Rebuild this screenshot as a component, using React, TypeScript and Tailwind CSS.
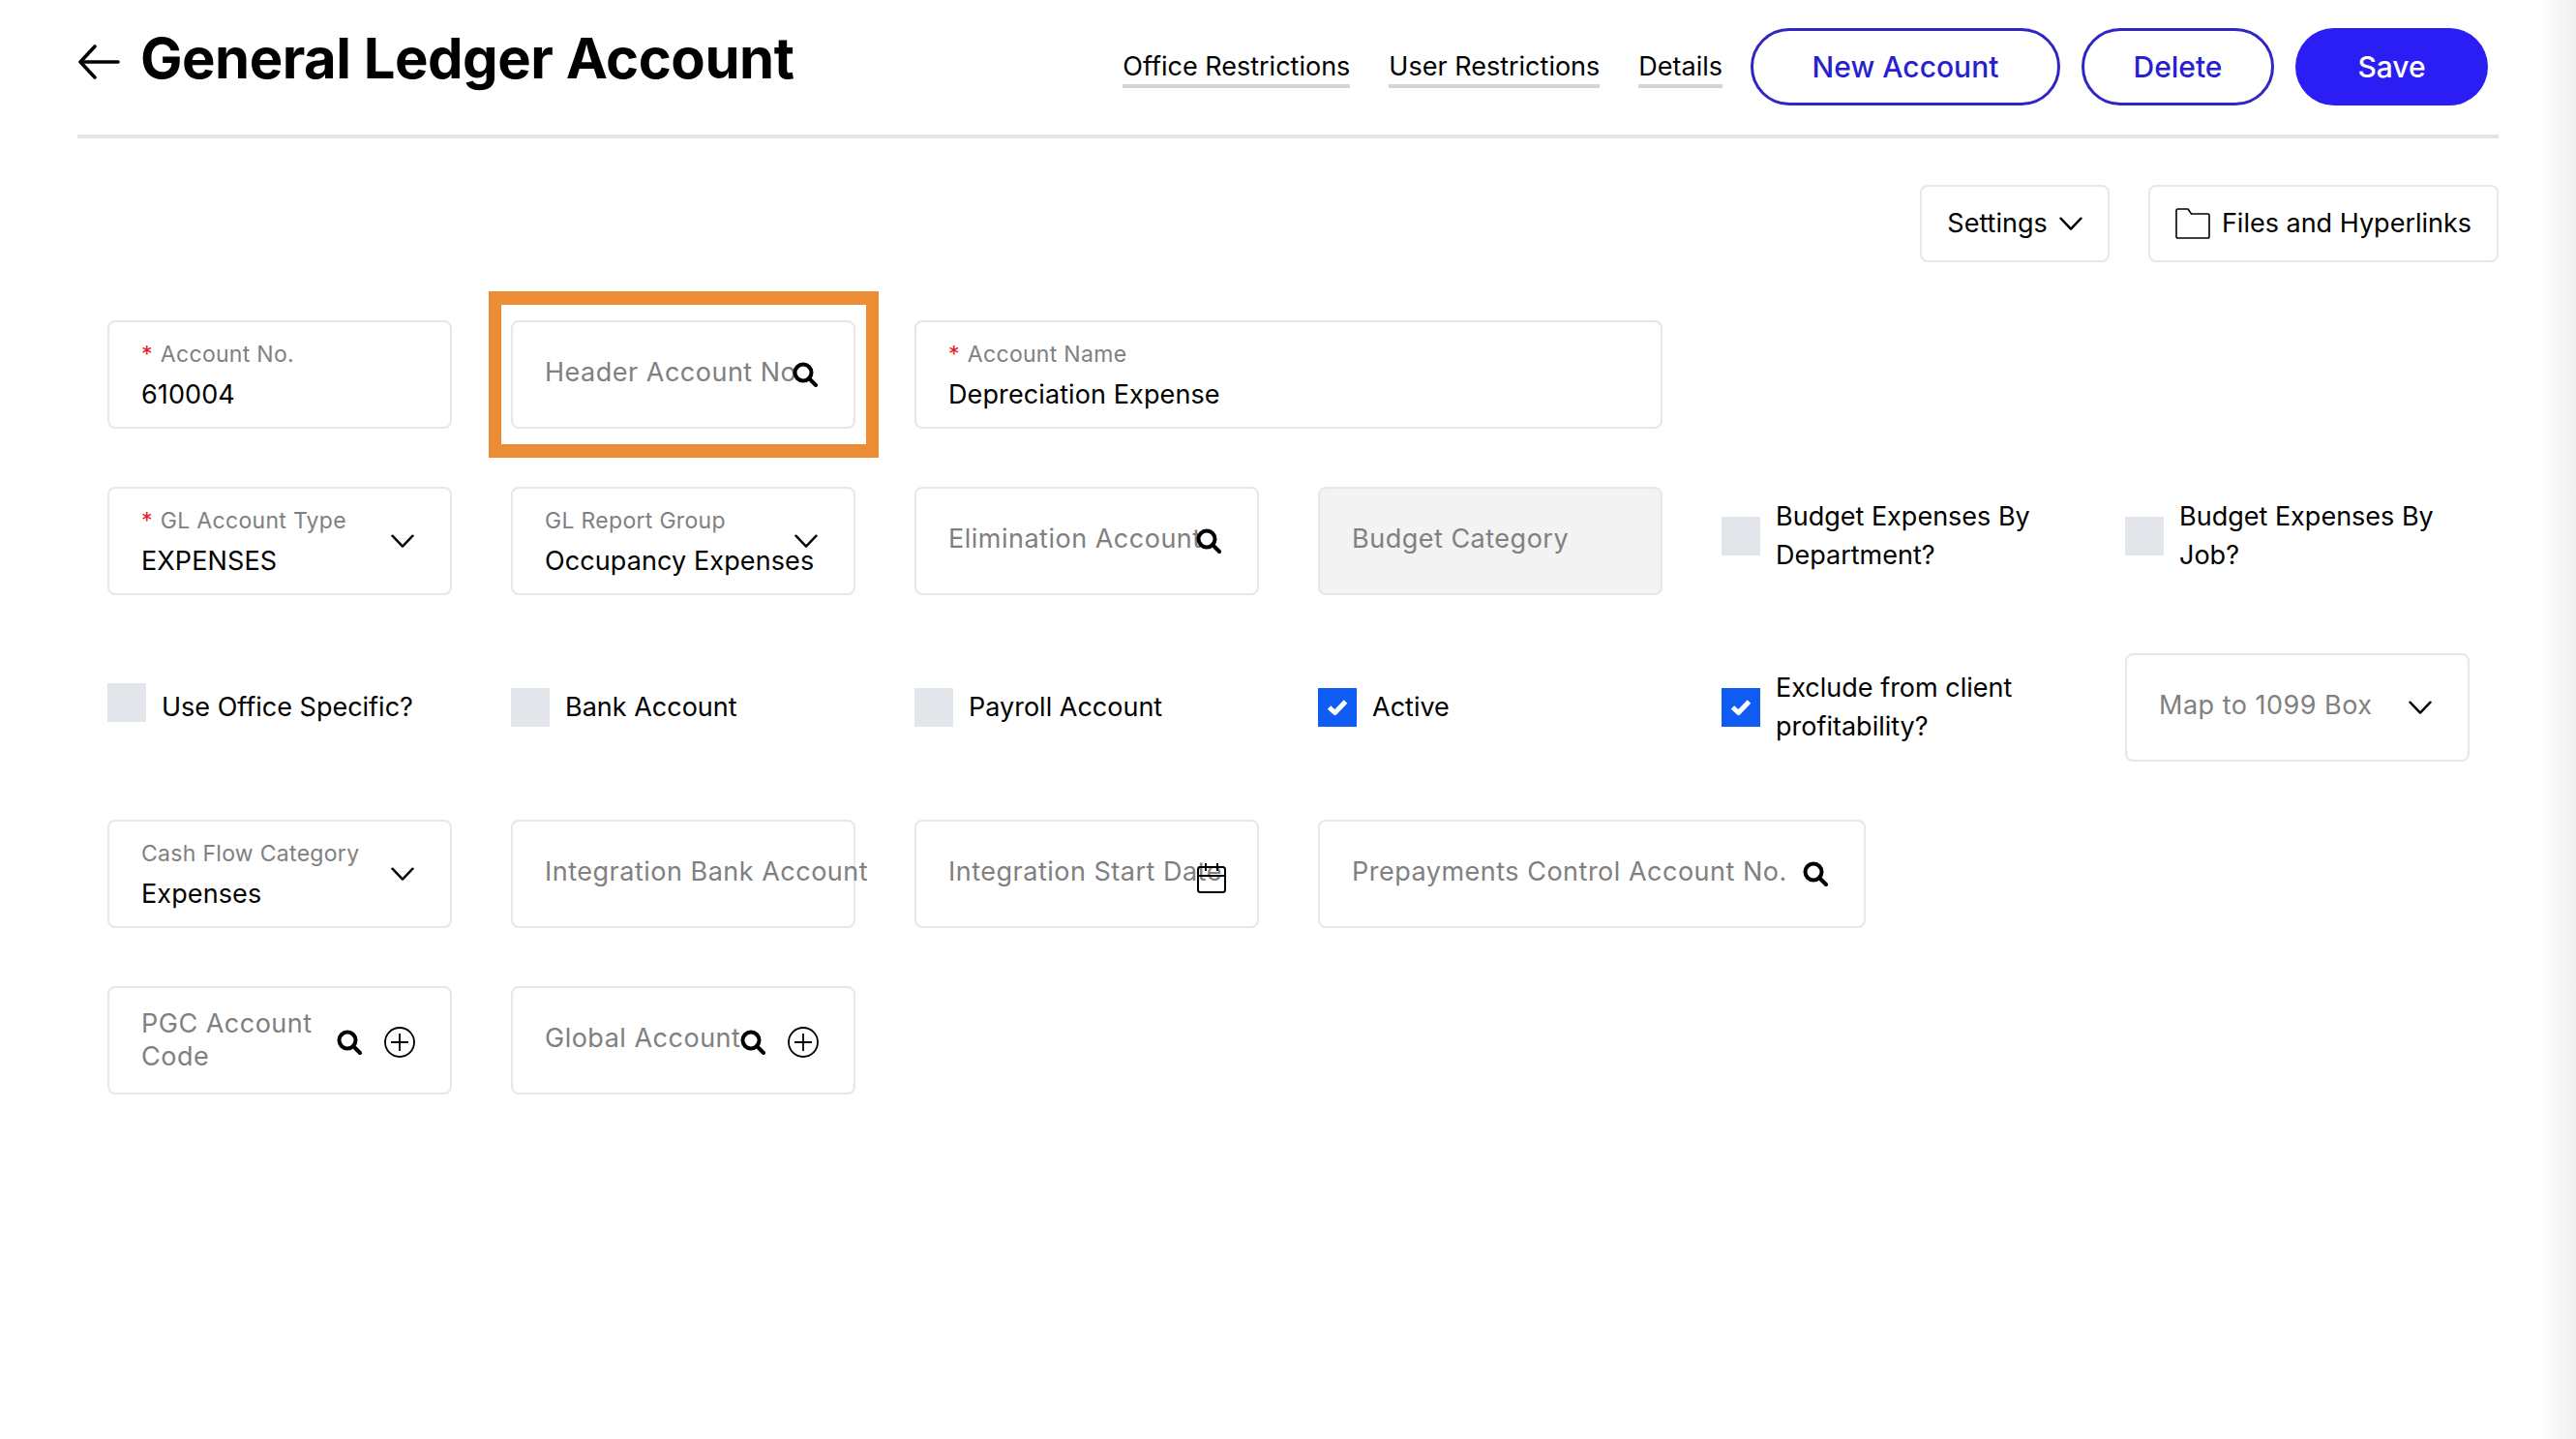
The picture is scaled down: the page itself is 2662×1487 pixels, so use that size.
import React from 'react';

const SearchIcon = () => (
  <svg width="26" height="26" viewBox="0 0 26 26" fill="none" stroke="#000" strokeWidth="4">
    <circle cx="11" cy="11" r="8.5" />
    <path d="M17 17l7 7" strokeLinecap="round" />
  </svg>
);

const Chevron = ({ size = 24 }: { size?: number }) => (
  <svg width={size} height={size * 0.6} viewBox="0 0 24 14" fill="none" stroke="#000" strokeWidth="2.4" strokeLinecap="round" strokeLinejoin="round">
    <path d="M1.5 1.5L12 12.5 22.5 1.5" />
  </svg>
);

const PlusCircle = () => (
  <svg width="32" height="32" viewBox="0 0 32 32" fill="none" stroke="#000" strokeWidth="1.8">
    <circle cx="16" cy="16" r="15" />
    <path d="M16 7v18M7 16h18" />
  </svg>
);

const CalendarIcon = () => (
  <svg width="30" height="32" viewBox="0 0 30 32" fill="none" stroke="#000" strokeWidth="2">
    <rect x="1" y="5" width="28" height="26" rx="2.5" />
    <path d="M1 14h28M9 1v8M21 1v8" />
  </svg>
);

const FolderIcon = () => (
  <svg width="36" height="32" viewBox="0 0 36 32" fill="none" stroke="#000" strokeWidth="1.6" strokeLinejoin="round">
    <path d="M1 2.5A1.5 1.5 0 0 1 2.5 1h10.5l3.5 5h17A1.5 1.5 0 0 1 35 7.500V29.500A1.500 1.500 0 0 1 33.500 31h-31A1.500 1.500 0 0 1 1 29.500z" />
  </svg>
);

const Box = ({ className = '', children }: { className?: string; children: React.ReactNode }) => (
  <div className={`relative h-[112px] rounded-lg border-2 border-[#e5e7eb] flex flex-col justify-center pl-[33px] ${className}`}>
    {children}
  </div>
);

const Filled = ({ label, value, required, chevron }: { label: string; value: string; required?: boolean; chevron?: boolean }) => (
  <Box>
    <div className="text-[23px] leading-[30px] text-[#808080] whitespace-nowrap tracking-[0.3px]">
      {required && <span className="text-[#e02020] mr-2">*</span>}
      {label}
    </div>
    <div className="mt-[11px] text-[27px] leading-[32px] text-black whitespace-nowrap tracking-[0.1px]">{value}</div>
    {chevron && (
      <div className="absolute right-[37px] top-[47px]">
        <Chevron />
      </div>
    )}
  </Box>
);

const Placeholder = ({ text, icon, className = '' }: { text: string; icon?: React.ReactNode; className?: string }) => (
  <Box className={className}>
    <div className="text-[27px] leading-[32px] text-[#808080] whitespace-nowrap tracking-[0.5px] -mt-[4px]">{text}</div>
    {icon}
  </Box>
);

const Check = ({ label, on, className = '' }: { label: string; on?: boolean; className?: string }) => (
  <div className="flex items-center gap-4">
    <div className={`w-10 h-10 shrink-0 flex items-center justify-center ${on ? 'bg-[#0f5cf5]' : 'bg-[#e2e5ea]'} ${className}`}>
      {on && (
        <svg width="22" height="18" viewBox="0 0 22 18" fill="none" stroke="#fff" strokeWidth="5" strokeLinejoin="round">
          <path d="M2.500 9l6 5.500L19.500 3" />
        </svg>
      )}
    </div>
    <div className="text-[27px] leading-[40px] text-black">{label}</div>
  </div>
);

const Tab = ({ children }: { children: React.ReactNode }) => (
  <div className="text-[27px] leading-[32px] text-black border-b-4 border-[#d4d4d4] pb-[2px] whitespace-nowrap">{children}</div>
);

export default function App() {
  return (
    <div className="relative w-full h-[1487px] bg-white overflow-hidden font-['Inter',sans-serif]">
      {/* sombra do painel lateral */}
      <div className="absolute top-0 right-0 bottom-0 w-[40px] bg-gradient-to-r from-white to-[#f0f0f0]" />

      {/* Header */}
      <header className="relative mx-[80px] h-[143px] border-b-4 border-[#e2e4e8] flex items-start pr-[11px]">
        <div className="flex items-center mt-[24px]">
          <svg width="44" height="36" viewBox="0 0 44 36" fill="none" stroke="#000" strokeWidth="3.600" strokeLinecap="round" strokeLinejoin="round" className="mt-[7px]">
            <path d="M42 18H3M18 2L3 18l15 16" />
          </svg>
          <h1 className="ml-[21px] text-[58px] leading-[72px] font-bold text-black whitespace-nowrap tracking-[-0.5px]">General Ledger Account</h1>
        </div>
        <div className="ml-auto flex items-start mt-[29px]">
          <div className="flex gap-10 mt-[24px] mr-[29px]">
            <Tab>Office Restrictions</Tab>
            <Tab>User Restrictions</Tab>
            <Tab>Details</Tab>
          </div>
          <div className="flex gap-[22px]">
            <button className="w-[320px] h-[80px] rounded-full border-[3px] border-[#3126c4] text-[#2a1fd0] text-[30px] font-medium">New Account</button>
            <button className="w-[199px] h-[80px] rounded-full border-[3px] border-[#3126c4] text-[#2a1fd0] text-[30px] font-medium">Delete</button>
            <button className="w-[199px] h-[80px] rounded-full bg-[#2a1ef5] text-white text-[30px] font-medium">Save</button>
          </div>
        </div>
      </header>

      {/* Acoes */}
      <div className="flex justify-end gap-10 mt-[48px] mr-[80px]">
        <button className="w-[196px] h-[80px] rounded-lg border-2 border-[#e5e7eb] flex items-center justify-center gap-3 text-[27px] text-black">
          Settings
          <Chevron />
        </button>
        <button className="w-[362px] h-[80px] rounded-lg border-2 border-[#e5e7eb] flex items-center justify-center gap-3 text-[27px] text-black">
          <FolderIcon />
          Files and Hyperlinks
        </button>
      </div>

      {/* Formulario */}
      <div className="ml-[111px] mt-[60px] grid grid-cols-[repeat(6,356px)] auto-rows-[112px] gap-x-[61px] gap-y-[60px]">
        <Filled required label="Account No." value="610004" />
        <div className="relative">
          <Placeholder
            text="Header Account No."
            icon={
              <div className="absolute right-[37px] top-[41px]">
                <SearchIcon />
              </div>
            }
          />
          <div className="absolute -left-[23px] -right-[24px] -top-[30px] -bottom-[30px] border-x-[13px] border-y-[14px] border-[#ec8c35] pointer-events-none" />
        </div>
        <div className="col-span-2">
          <Filled required label="Account Name" value="Depreciation Expense" />
        </div>
        <div className="col-span-2" />

        <Filled required label="GL Account Type" value="EXPENSES" chevron />
        <Filled label="GL Report Group" value="Occupancy Expenses" chevron />
        <Placeholder
          text="Elimination Account"
          icon={
            <div className="absolute right-[37px] top-[41px]">
              <SearchIcon />
            </div>
          }
        />
        <Placeholder text="Budget Category" className="bg-[#f3f3f3]" />
        <div className="flex items-center -mt-[10px]">
          <Check label="Budget Expenses By Department?" />
        </div>
        <div className="flex items-center -mt-[10px] pr-[20px]">
          <Check label="Budget Expenses By Job?" />
        </div>

        <div className="flex items-center">
          <Check label="Use Office Specific?" className="-mt-[10px]" />
        </div>
        <div className="flex items-center">
          <Check label="Bank Account" />
        </div>
        <div className="flex items-center">
          <Check label="Payroll Account" />
        </div>
        <div className="flex items-center">
          <Check label="Active" on />
        </div>
        <div className="flex items-center">
          <Check label="Exclude from client profitability?" on />
        </div>
        <Placeholder
          text="Map to 1099 Box"
          icon={
            <div className="absolute right-[37px] top-[47px]">
              <Chevron />
            </div>
          }
        />

        <Filled label="Cash Flow Category" value="Expenses" chevron />
        <Placeholder text="Integration Bank Account" />
        <Placeholder
          text="Integration Start Date"
          icon={
            <div className="absolute right-[32px] top-[42px]">
              <CalendarIcon />
            </div>
          }
        />
        <div className="col-span-3">
          <Placeholder
            className="w-[566px]"
            text="Prepayments Control Account No."
            icon={
              <div className="absolute right-[37px] top-[41px]">
                <SearchIcon />
              </div>
            }
          />
        </div>

        <Box>
          <div className="w-[190px] text-[27px] leading-[34px] text-[#808080] tracking-[0.5px]">PGC Account Code</div>
          <div className="absolute right-[36px] top-[40px] flex items-center gap-[23px]">
            <SearchIcon />
            <PlusCircle />
          </div>
        </Box>
        <Placeholder
          text="Global Account"
          icon={
            <div className="absolute right-[36px] top-[40px] flex items-center gap-[23px]">
              <SearchIcon />
              <PlusCircle />
            </div>
          }
        />
      </div>
    </div>
  );
}
